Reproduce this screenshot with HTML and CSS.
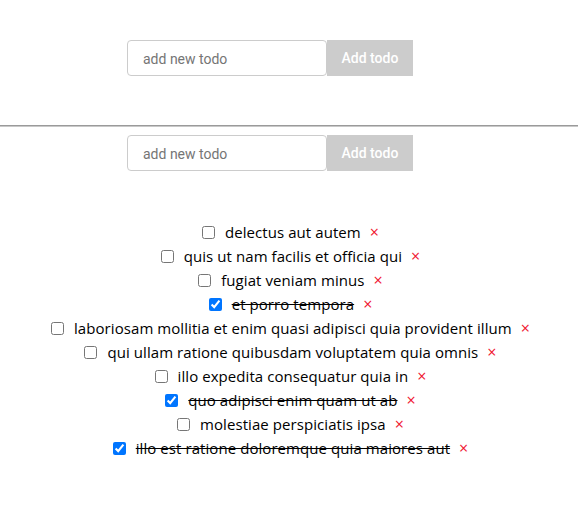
FILE: index.html
```html
<!DOCTYPE html>
<html>
<head>
<meta charset="utf-8">
<link rel="stylesheet" href="styles.css">
</head>
<body>
<section class="top">
  <form class="add-form">
    <input class="add-input" type="text" placeholder="add new todo">
    <button class="add-btn" type="button">Add todo</button>
  </form>
</section>
<hr class="divider">
<section class="main">
  <form class="add-form">
    <input class="add-input" type="text" placeholder="add new todo">
    <button class="add-btn" type="button">Add todo</button>
  </form>
  <ul class="todos">
    <li class="todo"><input type="checkbox" class="cb"><span class="txt">delectus aut autem</span><span class="del">×</span></li>
    <li class="todo"><input type="checkbox" class="cb"><span class="txt">quis ut nam facilis et officia qui</span><span class="del">×</span></li>
    <li class="todo"><input type="checkbox" class="cb"><span class="txt">fugiat veniam minus</span><span class="del">×</span></li>
    <li class="todo done"><input type="checkbox" class="cb" checked><span class="txt">et porro tempora</span><span class="del">×</span></li>
    <li class="todo"><input type="checkbox" class="cb"><span class="txt">laboriosam mollitia et enim quasi adipisci quia provident illum</span><span class="del">×</span></li>
    <li class="todo"><input type="checkbox" class="cb"><span class="txt">qui ullam ratione quibusdam voluptatem quia omnis</span><span class="del">×</span></li>
    <li class="todo"><input type="checkbox" class="cb"><span class="txt">illo expedita consequatur quia in</span><span class="del">×</span></li>
    <li class="todo done"><input type="checkbox" class="cb" checked><span class="txt">quo adipisci enim quam ut ab</span><span class="del">×</span></li>
    <li class="todo"><input type="checkbox" class="cb"><span class="txt">molestiae perspiciatis ipsa</span><span class="del">×</span></li>
    <li class="todo done"><input type="checkbox" class="cb" checked><span class="txt">illo est ratione doloremque quia maiores aut</span><span class="del">×</span></li>
  </ul>
</section>
</body>
</html>
```
FILE: styles.css
```css
html, body {
  margin: 0;
  padding: 0;
  background: #fff;
}
body {
  font-family: "Open Sans", "Noto Sans", sans-serif;
  color: #000;
}
.top {
  padding-top: 40px;
  padding-bottom: 49px;
}
.add-form {
  display: flex;
  justify-content: center;
  margin: 0;
  padding-right: 38px;
}
.add-input {
  box-sizing: border-box;
  width: 200px;
  height: 36px;
  margin: 0;
  padding: 1px 15px 0;
  border: 1px solid #ccc;
  border-radius: 4px;
  font-family: Roboto, "Liberation Sans", sans-serif;
  font-size: 14px;
  color: #333;
  outline: none;
}
.add-input::placeholder {
  color: #757575;
}
.add-btn {
  box-sizing: border-box;
  width: 86px;
  height: 36px;
  margin: 0;
  padding-top: 1px;
  border: none;
  background: #ccc;
  color: #fff;
  font-family: Roboto, "Liberation Sans", sans-serif;
  font-size: 14px;
  font-weight: 500;
}
.divider {
  margin: 0;
  height: 0;
  border: none;
  border-top: 1px solid #9a9a9a;
  border-bottom: 1px solid #c8c8c8;
}
.main {
  padding-top: 8px;
}
.todos {
  list-style: none;
  margin: 49px 0 0;
  padding: 0 0 0 3px;
}
.todo {
  display: flex;
  justify-content: center;
  align-items: center;
  height: 24px;
  font-size: 15px;
  letter-spacing: 0.07px;
}
.cb {
  width: 13px;
  height: 13px;
  margin: 0 10px 0 0;
}
.done .txt {
  text-decoration: line-through;
}
.del {
  margin-left: 9px;
  color: #f0142f;
  font-size: 16px;
}
```
